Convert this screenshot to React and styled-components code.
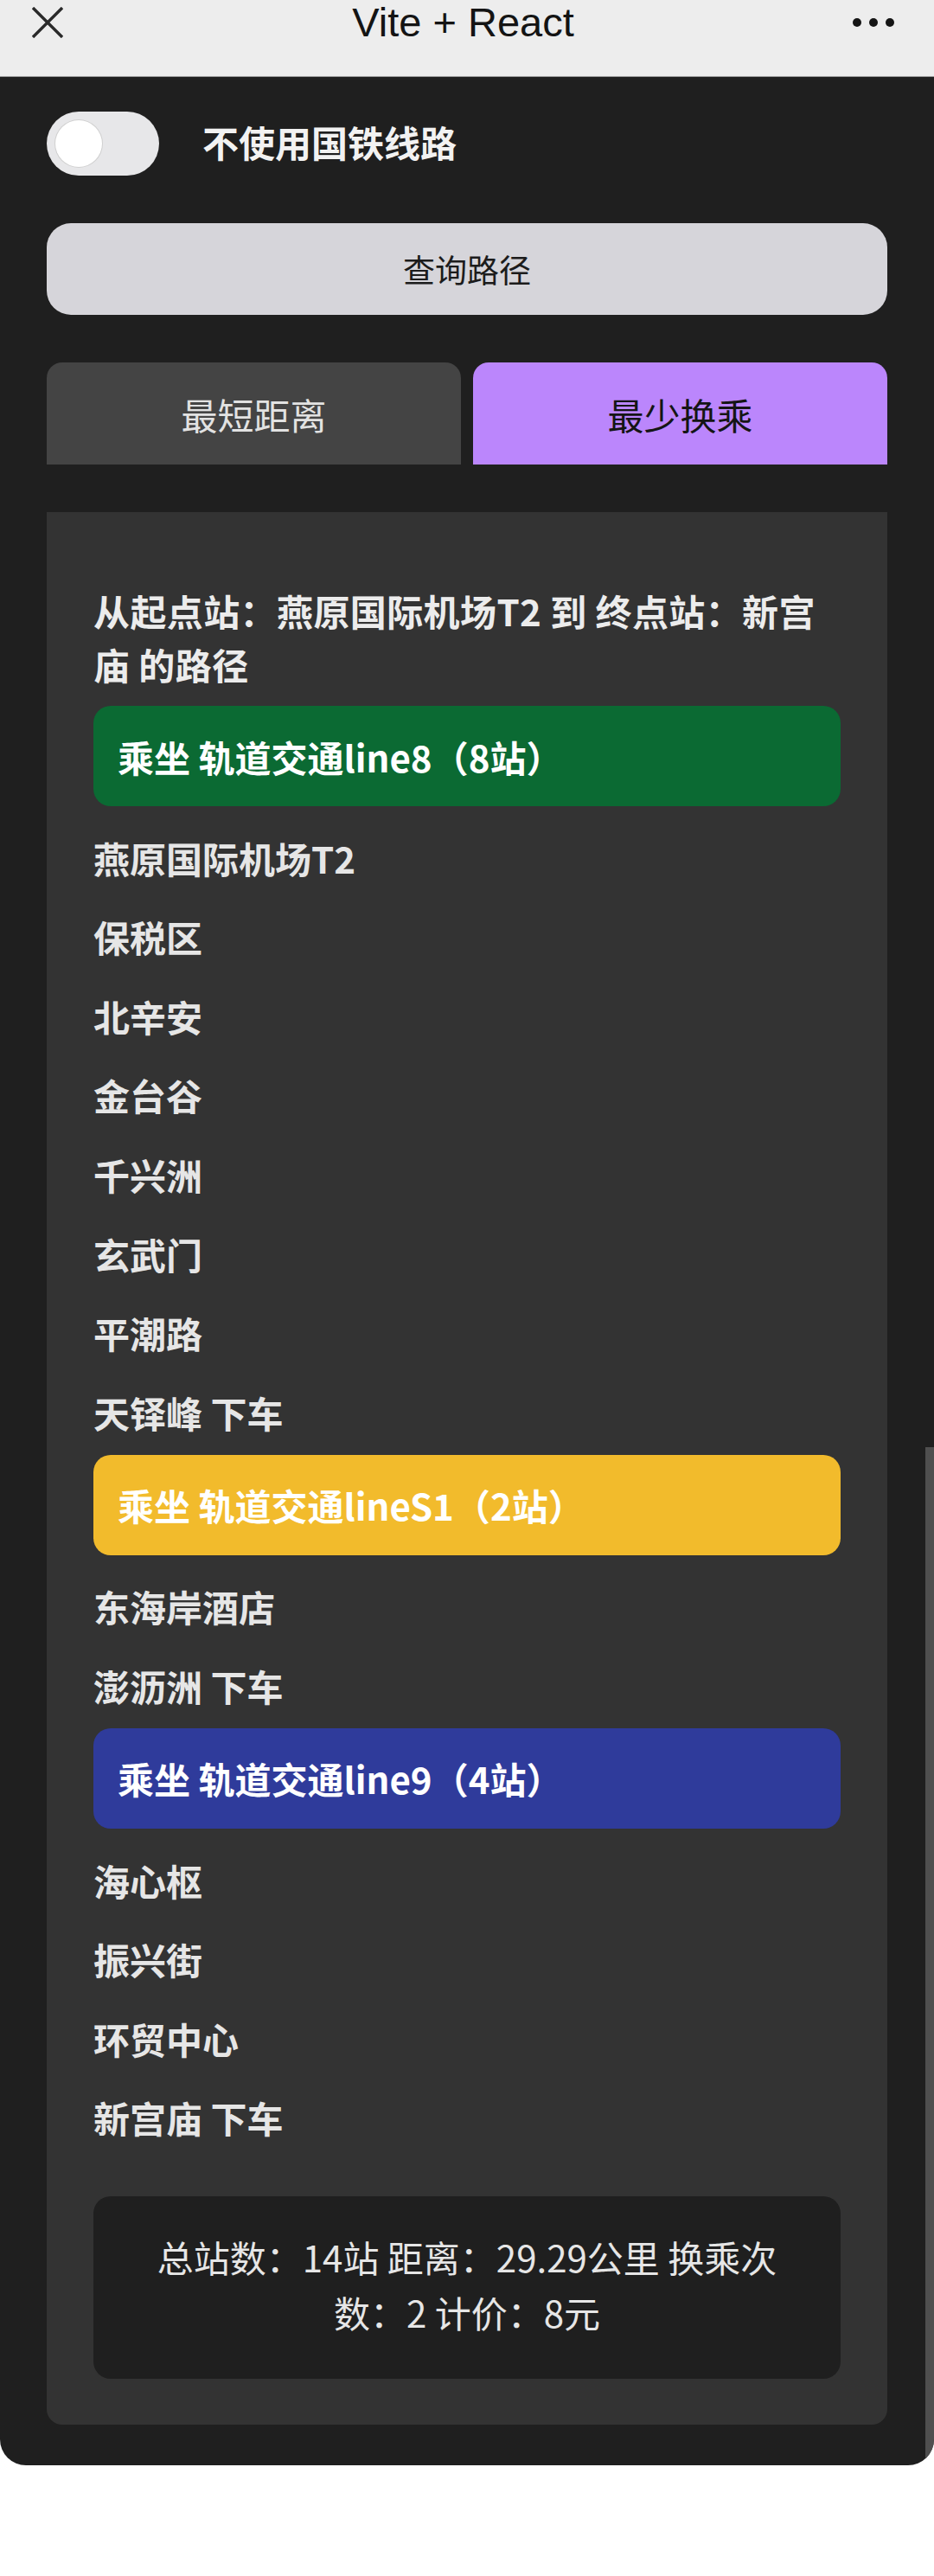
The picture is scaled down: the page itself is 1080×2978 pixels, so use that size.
import React from 'react';
import styled, { createGlobalStyle } from 'styled-components';

const GlobalStyle = createGlobalStyle`
  body {
    margin: 0;
    background: #ffffff;
    font-family: "Noto Sans CJK SC", "Noto Sans", sans-serif;
  }
`;

const TopBar = styled.div`
  height: 89px;
  background: #ededed;
  border-bottom: 1px solid #9a9a9a;
  box-sizing: border-box;
  display: flex;
  align-items: flex-start;
  justify-content: space-between;
  padding: 0 46px 0 37px;
`;

const TopBarSlot = styled.div`
  width: 48px;
  height: 52px;
  display: flex;
  align-items: center;
  justify-content: ${(p) => (p.$end ? 'flex-end' : 'flex-start')};
`;

const Title = styled.div`
  font-family: "Liberation Sans", Arial, sans-serif;
  font-size: 47px;
  line-height: 52px;
  color: #141414;
`;

const Screen = styled.main`
  position: relative;
  background: #1f1f1f;
  padding: 40px 54px 47px;
  border-radius: 0 0 30px 30px;
  overflow: hidden;
`;

const ScrollThumb = styled.div`
  position: absolute;
  right: 0;
  top: 1584px;
  bottom: 0;
  width: 10px;
  background: #4f4f4f;
`;

const ToggleRow = styled.div`
  display: flex;
  align-items: center;
  gap: 50px;
`;

const Switch = styled.div`
  width: 130px;
  height: 74px;
  border-radius: 37px;
  background: #e7e7e9;
  display: flex;
  align-items: center;
  padding: 0 10px;
  box-sizing: border-box;
`;

const Knob = styled.div`
  width: 54px;
  height: 54px;
  border-radius: 50%;
  background: #ffffff;
  box-shadow: 0 0 0 1px #d0d0d0;
`;

const ToggleLabel = styled.span`
  font-size: 42px;
  line-height: 60px;
  font-weight: 700;
  color: #f2f2f2;
  margin-top: -4px;
`;

const QueryButton = styled.button`
  display: block;
  width: 100%;
  height: 106px;
  margin-top: 55px;
  border: none;
  border-radius: 28px;
  background: #d6d5da;
  color: #1c1c1c;
  font-family: inherit;
  font-size: 37px;
`;

const Tabs = styled.div`
  display: grid;
  grid-template-columns: 1fr 1fr;
  gap: 14px;
  margin-top: 55px;
`;

const Tab = styled.div`
  height: 118px;
  border-radius: 18px 18px 0 0;
  display: flex;
  align-items: center;
  justify-content: center;
  font-size: 42px;
  background: ${(p) => (p.$active ? '#bb86fc' : '#444444')};
  color: ${(p) => (p.$active ? '#151515' : '#e2e2e2')};
`;

const Panel = styled.section`
  margin-top: 55px;
  background: #333333;
  border-radius: 0 0 18px 18px;
  padding: 83px 54px 53px;
`;

const Heading = styled.div`
  font-size: 42px;
  line-height: 62px;
  font-weight: 700;
  color: #ececec;
  letter-spacing: 0.4px;
`;

const LineBar = styled.div`
  margin-top: 17px;
  height: 116px;
  border-radius: 20px;
  background: ${(p) => p.$color};
  display: flex;
  align-items: center;
  padding: 0 28px;
  font-size: 42px;
  font-weight: 700;
  color: #ffffff;
`;

const Station = styled.div`
  padding-top: 27.6px;
  font-size: 42px;
  line-height: 64px;
  font-weight: 700;
  color: #e6e6e6;
`;

const Summary = styled.div`
  margin-top: 59px;
  background: #1f1f1f;
  border-radius: 20px;
  padding: 38px 58px 45px;
  text-align: center;
  font-size: 42px;
  line-height: 64px;
  color: #e6e6e6;
`;

const CloseIcon = () => (
  <svg width="36" height="36" viewBox="0 0 36 36">
    <path d="M1 1 L35 35 M35 1 L1 35" stroke="#2a2a2a" strokeWidth="3.4" fill="none" />
  </svg>
);

const MoreIcon = () => (
  <svg width="48" height="12" viewBox="0 0 48 12">
    <circle cx="5" cy="6" r="5" fill="#151515" />
    <circle cx="24" cy="6" r="5" fill="#151515" />
    <circle cx="43" cy="6" r="5" fill="#151515" />
  </svg>
);

const route = [
  {
    line: '乘坐 轨道交通line8（8站）',
    color: '#0b6a33',
    stops: ['燕原国际机场T2', '保税区', '北辛安', '金台谷', '千兴洲', '玄武门', '平潮路', '天铎峰 下车'],
  },
  {
    line: '乘坐 轨道交通lineS1（2站）',
    color: '#f2bb2c',
    stops: ['东海岸酒店', '澎沥洲 下车'],
  },
  {
    line: '乘坐 轨道交通line9（4站）',
    color: '#2f3b9b',
    stops: ['海心枢', '振兴街', '环贸中心', '新宫庙 下车'],
  },
];

export default function App() {
  return (
    <>
      <GlobalStyle />
      <TopBar>
        <TopBarSlot>
          <CloseIcon />
        </TopBarSlot>
        <Title>Vite + React</Title>
        <TopBarSlot $end>
          <MoreIcon />
        </TopBarSlot>
      </TopBar>
      <Screen>
        <ToggleRow>
          <Switch>
            <Knob />
          </Switch>
          <ToggleLabel>不使用国铁线路</ToggleLabel>
        </ToggleRow>
        <QueryButton>查询路径</QueryButton>
        <Tabs>
          <Tab>最短距离</Tab>
          <Tab $active>最少换乘</Tab>
        </Tabs>
        <Panel>
          <Heading>从起点站：燕原国际机场T2 到 终点站：新宫庙 的路径</Heading>
          {route.map((seg) => (
            <React.Fragment key={seg.line}>
              <LineBar $color={seg.color}>{seg.line}</LineBar>
              {seg.stops.map((s) => (
                <Station key={s}>{s}</Station>
              ))}
            </React.Fragment>
          ))}
          <Summary>总站数：14站 距离：29.29公里 换乘次数：2 计价：8元</Summary>
        </Panel>
        <ScrollThumb />
      </Screen>
    </>
  );
}
